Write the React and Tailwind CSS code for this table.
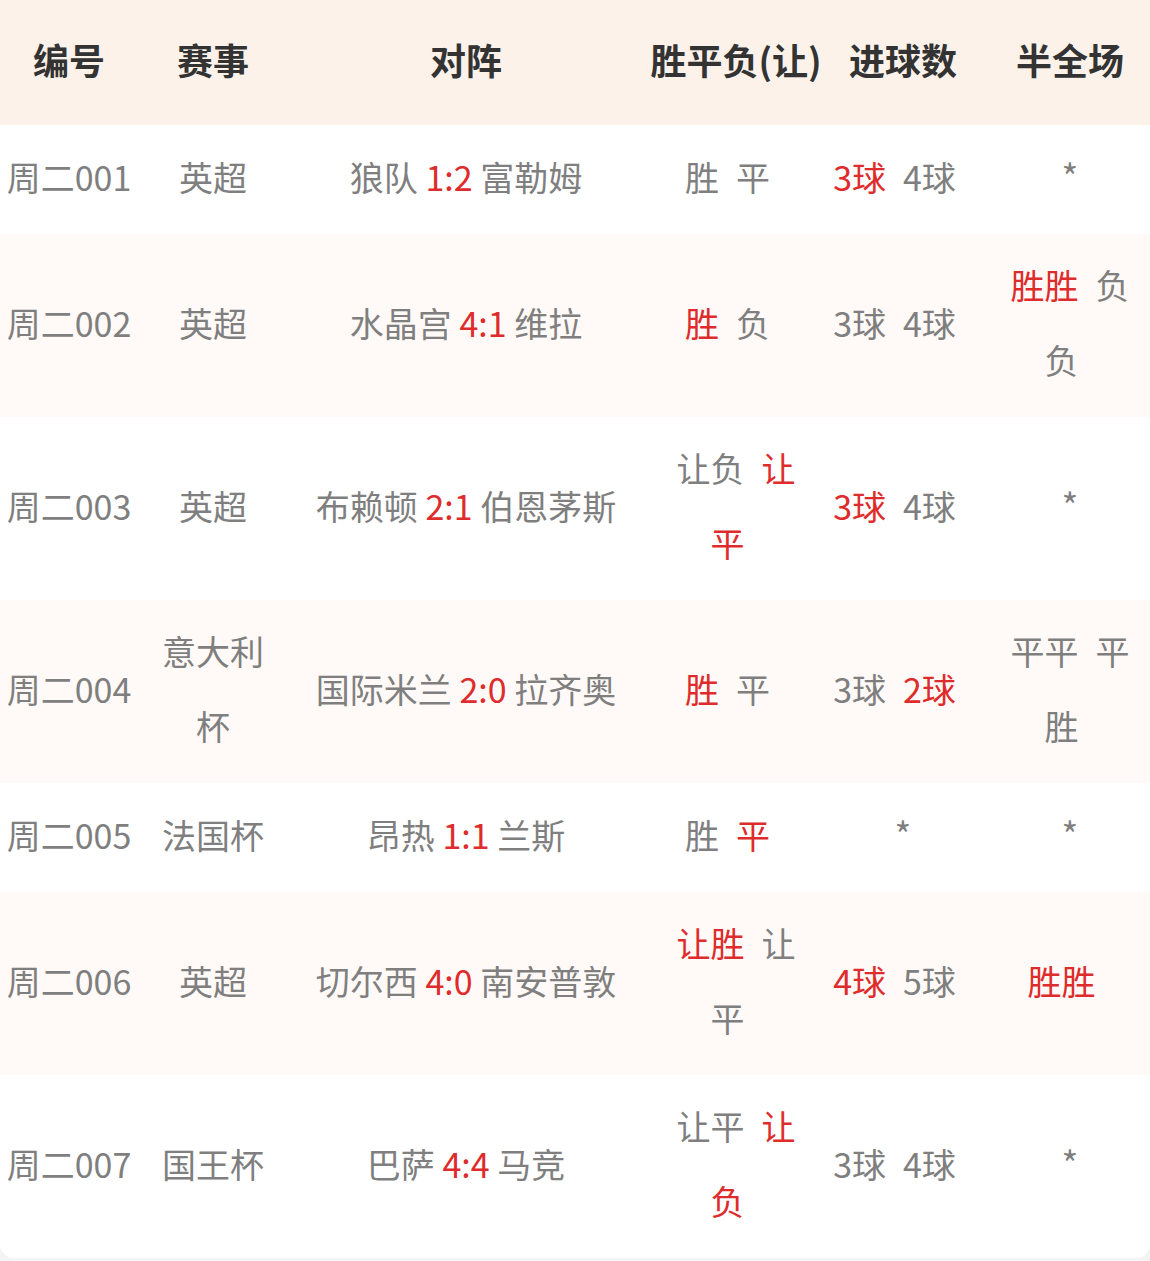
const rows = [
  { no: '周二001', league: '英超', home: '狼队', score: '1:2', away: '富勒姆', spf: [['胜', 0], ['平', 0]], goals: [['3球', 1], ['4球', 0]], half: null, alt: false, tall: false },
  { no: '周二002', league: '英超', home: '水晶宫', score: '4:1', away: '维拉', spf: [['胜', 1], ['负', 0]], goals: [['3球', 0], ['4球', 0]], half: [['胜胜', 1], ['负负', 0]], alt: true, tall: true },
  { no: '周二003', league: '英超', home: '布赖顿', score: '2:1', away: '伯恩茅斯', spf: [['让负', 0], ['让平', 1]], goals: [['3球', 1], ['4球', 0]], half: null, alt: false, tall: true },
  { no: '周二004', league: '意大利杯', home: '国际米兰', score: '2:0', away: '拉齐奥', spf: [['胜', 1], ['平', 0]], goals: [['3球', 0], ['2球', 1]], half: [['平平', 0], ['平胜', 0]], alt: true, tall: true },
  { no: '周二005', league: '法国杯', home: '昂热', score: '1:1', away: '兰斯', spf: [['胜', 0], ['平', 1]], goals: null, half: null, alt: false, tall: false },
  { no: '周二006', league: '英超', home: '切尔西', score: '4:0', away: '南安普敦', spf: [['让胜', 1], ['让平', 0]], goals: [['4球', 1], ['5球', 0]], half: [['胜胜', 1]], alt: true, tall: true },
  { no: '周二007', league: '国王杯', home: '巴萨', score: '4:4', away: '马竞', spf: [['让平', 0], ['让负', 1]], goals: [['3球', 0], ['4球', 0]], half: null, alt: false, tall: true },
];

const Picks = ({ items }) => {
  if (!items) return <span className="text-[36px]">*</span>;
  return (
    <>
      {items.map(([t, hit], i) => (
        <span key={i} className={`mr-[17px] ${hit ? 'text-[#de2c2c]' : ''}`}>
          {t}
        </span>
      ))}
    </>
  );
};

export default function App() {
  return (
    <div
      className="bg-[#f4f4f4] pb-[5px]"
      style={{ fontFamily: '"Noto Sans CJK SC", "Noto Sans", sans-serif' }}
    >
      <div className="bg-white rounded-b-[14px] overflow-hidden">
        {/* header */}
        <div className="flex h-[125px] items-center pb-[8px] bg-[#fcf2ea] text-[36px] font-bold text-[#333333]">
          <div className="w-[138px] text-center">编号</div>
          <div className="w-[150px] text-center">赛事</div>
          <div className="w-[356px] text-center">对阵</div>
          <div className="w-[184px] text-center whitespace-nowrap">胜平负(让)</div>
          <div className="w-[150px] text-center">进球数</div>
          <div className="w-[172px] pl-[22px] pr-[10px] text-center">半全场</div>
        </div>

        {/* rows */}
        {rows.map((r) => (
          <div
            key={r.no}
            className={`flex items-center pt-[13px] pb-[20px] text-[34px] leading-[75px] text-[#7f7f7f] ${r.alt ? 'bg-[#fffaf7]' : 'bg-white'} ${r.tall ? 'min-h-[183px]' : 'min-h-[108px]'}`}
          >
            <div className="w-[138px] text-center whitespace-nowrap">{r.no}</div>
            <div className="w-[150px] px-[12px] text-center">{r.league}</div>
            <div className="w-[356px] text-center whitespace-nowrap">
              {r.home} <span className="text-[#de2c2c]">{r.score}</span> {r.away}
            </div>
            <div className="w-[184px] px-[20px] text-center">
              <Picks items={r.spf} />
            </div>
            <div className="w-[150px] text-center whitespace-nowrap">
              <Picks items={r.goals} />
            </div>
            <div className="w-[172px] pl-[22px] pr-[10px] text-center">
              <Picks items={r.half} />
            </div>
          </div>
        ))}
      </div>
    </div>
  );
}
